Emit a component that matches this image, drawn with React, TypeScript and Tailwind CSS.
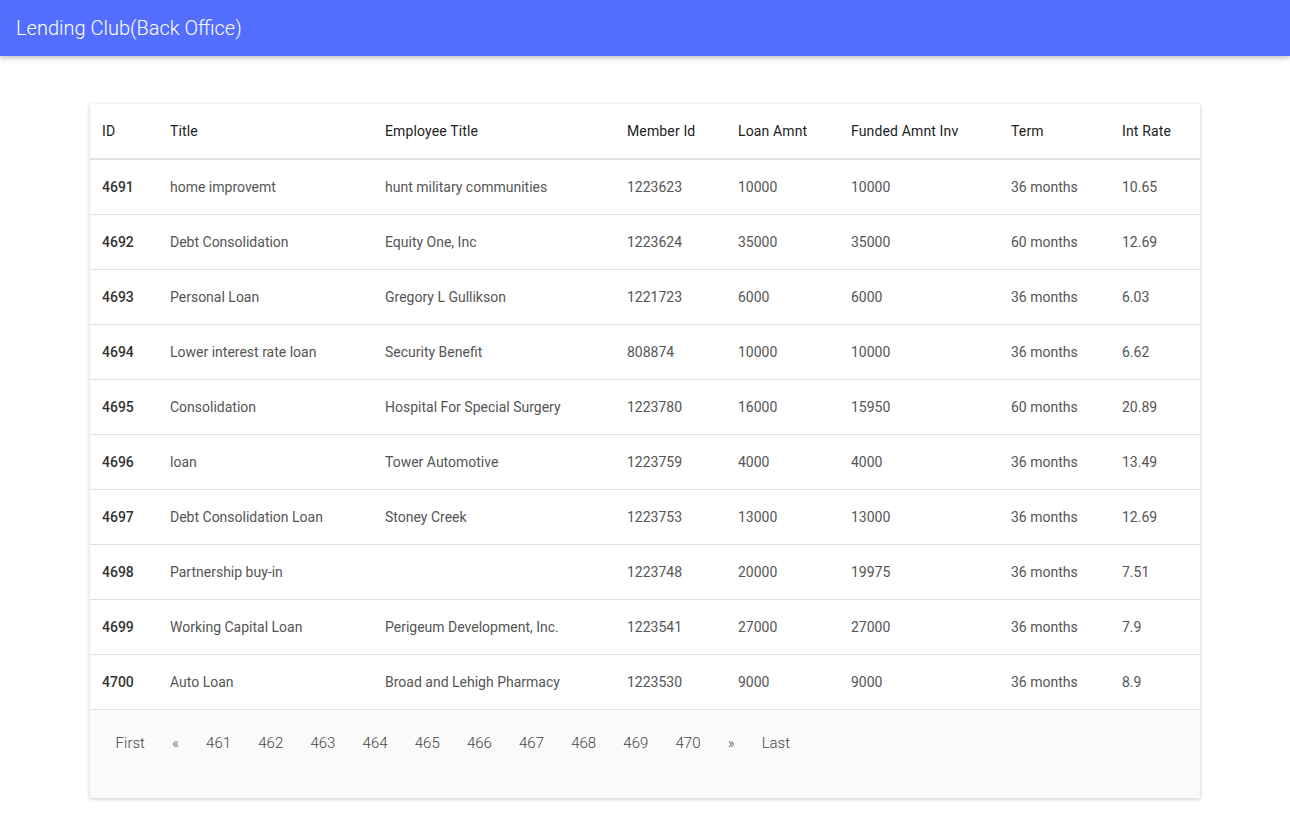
import React from 'react'

const rows = [
  ['4691', 'home improvemt', 'hunt military communities', '1223623', '10000', '10000', '36 months', '10.65'],
  ['4692', 'Debt Consolidation', 'Equity One, Inc', '1223624', '35000', '35000', '60 months', '12.69'],
  ['4693', 'Personal Loan', 'Gregory L Gullikson', '1221723', '6000', '6000', '36 months', '6.03'],
  ['4694', 'Lower interest rate loan', 'Security Benefit', '808874', '10000', '10000', '36 months', '6.62'],
  ['4695', 'Consolidation', 'Hospital For Special Surgery', '1223780', '16000', '15950', '60 months', '20.89'],
  ['4696', 'loan', 'Tower Automotive', '1223759', '4000', '4000', '36 months', '13.49'],
  ['4697', 'Debt Consolidation Loan', 'Stoney Creek', '1223753', '13000', '13000', '36 months', '12.69'],
  ['4698', 'Partnership buy-in', '', '1223748', '20000', '19975', '36 months', '7.51'],
  ['4699', 'Working Capital Loan', 'Perigeum Development, Inc.', '1223541', '27000', '27000', '36 months', '7.9'],
  ['4700', 'Auto Loan', 'Broad and Lehigh Pharmacy', '1223530', '9000', '9000', '36 months', '8.9'],
]

const headers = ['ID', 'Title', 'Employee Title', 'Member Id', 'Loan Amnt', 'Funded Amnt Inv', 'Term', 'Int Rate']

const pages = ['First', '«', '461', '462', '463', '464', '465', '466', '467', '468', '469', '470', '»', 'Last']

const cols = 'grid grid-cols-[68px_215px_242px_111px_113px_160px_111px_90px]'

export default function App() {
  return (
    <div className="min-h-screen bg-white font-['Roboto',sans-serif]">
      <div className="h-14 bg-[#536dfe] flex items-center px-4 shadow-[0_2px_5px_rgba(0,0,0,0.26)]">
        <span className="text-white text-[20px] font-light">Lending Club(Back Office)</span>
      </div>

      <div className="pt-12 pl-[90px]">
        <div className="w-[1110px] bg-white shadow-[0_1px_4px_rgba(0,0,0,0.22)]">
          <div className={`${cols} h-[56px] items-center border-b-2 border-[#dde2e3] text-[14px] text-[#222]`}>
            {headers.map((h) => (
              <div key={h} className="pl-3 tracking-[0.01em]">
                {h}
              </div>
            ))}
          </div>

          {rows.map((r) => (
            <div
              key={r[0]}
              className={`${cols} h-[55px] items-center border-b border-[#e0e0e0] text-[14px] text-[#555]`}
            >
              {r.map((c, i) => (
                <div key={i} className={i === 0 ? 'pl-3 font-medium text-[#333]' : 'pl-3'}>
                  {c}
                </div>
              ))}
            </div>
          ))}

          <div className="h-[88px] bg-[#fafafa] pl-3 pt-[23px]">
            <div className="flex items-center text-[15px] font-light text-[#444]">
              {pages.map((p) => (
                <span key={p} className="px-[13.6px] leading-[20px]">
                  {p}
                </span>
              ))}
            </div>
          </div>
        </div>
      </div>
    </div>
  )
}
